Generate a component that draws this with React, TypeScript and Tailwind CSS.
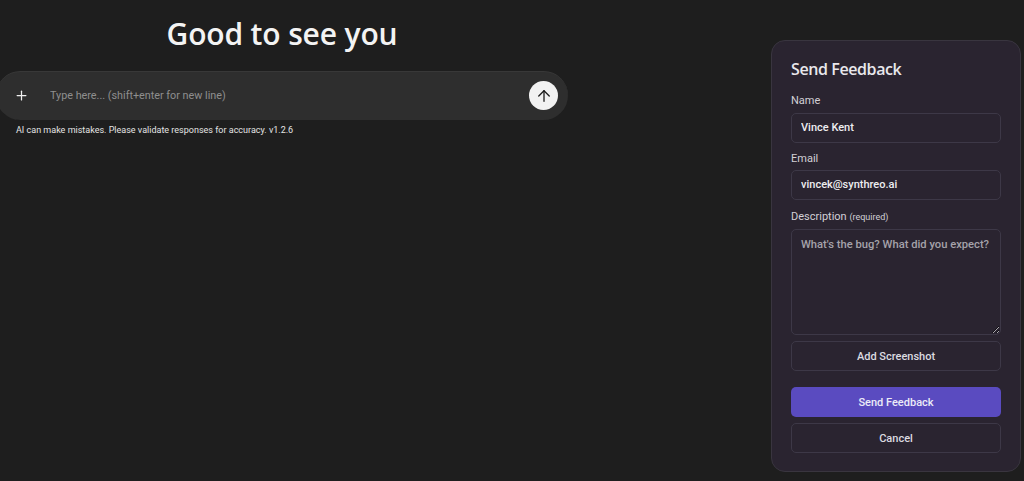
import { ArrowUp, Plus } from 'lucide-react'

const inputClass =
  'w-full h-[30px] bg-transparent border border-[#3d3847] rounded-[5px] px-[9px] pb-[1px] text-[11px] font-medium text-[#eeeef0] outline-none'

export default function App() {
  return (
    <div className="h-[481px] w-[1024px] overflow-hidden bg-[#1e1e1e] flex font-['Roboto',sans-serif] text-white">
      <main className="w-[572px] ml-[-4px] shrink-0 pt-[13px]">
        <h1 className="text-center text-[30px] leading-[42px] font-semibold text-[#f3f3f3] font-['Open_Sans',sans-serif] tracking-[-0.15px]">Good to see you</h1>
        <div className="mt-[16px] h-[49px] rounded-[25px] bg-[#2e2e2e] border-t border-[#383838] flex items-center pl-[18px] pr-[10px] pb-[1px]">
          <Plus className="w-[15px] h-[15px] text-[#f0f0f0]" strokeWidth={2} />
          <input
            className="ml-[21px] mt-[2px] flex-1 bg-transparent text-[10.8px] text-white outline-none placeholder:text-[#8e8e8e]"
            placeholder="Type here... (shift+enter for new line)"
          />
          <button className="w-[29px] h-[29px] rounded-full bg-[#f2f2f2] flex items-center justify-center">
            <ArrowUp className="w-[18px] h-[18px] text-[#1c1c1c]" strokeWidth={1.75} />
          </button>
        </div>
        <p className="mt-[3px] ml-[20px] text-[9px] leading-[14px] text-[#e4e4e4]">
          AI can make mistakes. Please validate responses for accuracy. v1.2.6
        </p>
      </main>

      <aside className="ml-[203px] mt-[40px] w-[250px] h-[432px] shrink-0 rounded-[14px] border border-[#39353f] bg-[#2a2430] px-[19px] pt-[18px]">
        <h2 className="text-[16px] leading-[20px] font-semibold text-[#e9e8ec] font-['Open_Sans',sans-serif] tracking-[-0.4px]">Send Feedback</h2>

        <label className="block mt-[15px] mb-[5px] text-[11px] leading-[14px] text-[#d2d0d6]">Name</label>
        <input className={inputClass} defaultValue="Vince Kent" />

        <label className="block mt-[9px] mb-[4px] text-[11px] leading-[14px] text-[#d2d0d6]">Email</label>
        <input className={inputClass} defaultValue="vincek@synthreo.ai" />

        <label className="block mt-[10px] mb-[5px] text-[11px] leading-[14px] text-[#d2d0d6]">
          Description <span className="text-[9px]">(required)</span>
        </label>
        <textarea
          className="block w-full h-[106px] bg-transparent border border-[#3d3847] rounded-[5px] px-[9px] py-[8px] text-[11.2px] leading-[14px] font-medium text-[#eeeef0] outline-none placeholder:text-[#a5a2aa] resize-y"
          placeholder="What's the bug? What did you expect?"
        />

        <button className="mt-[6px] w-full h-[30px] pt-[3px] rounded-[5px] border border-[#3d3847] text-[11px] font-medium text-[#dcdbe0]">
          Add Screenshot
        </button>
        <button className="mt-[16px] w-full h-[30px] pt-[3px] rounded-[5px] bg-[#5a4bc0] text-[11px] font-medium text-[#ecebf7]">
          Send Feedback
        </button>
        <button className="mt-[6px] w-full h-[30px] pt-[3px] rounded-[5px] border border-[#3d3847] text-[11px] font-medium text-[#dcdbe0]">
          Cancel
        </button>
      </aside>
    </div>
  )
}
